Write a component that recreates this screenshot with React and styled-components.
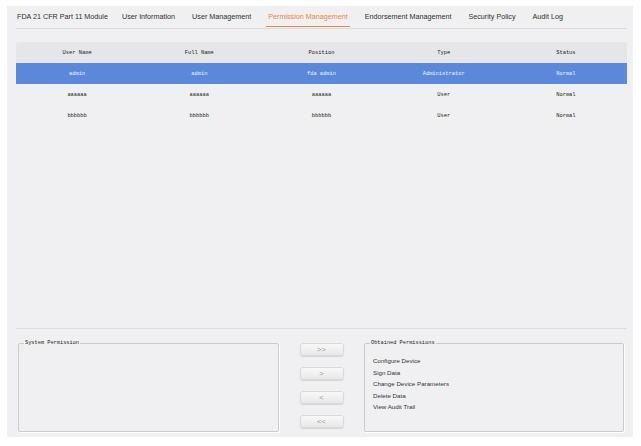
import React from 'react';
import styled, { createGlobalStyle } from 'styled-components';

const Global = createGlobalStyle`
  body {
    margin: 0;
    background: #ffffff;
    font-family: "Liberation Sans", Arial, sans-serif;
  }
`;

const Frame = styled.div`
  padding: 6px 0 0 7px;
`;

const Panel = styled.div`
  width: 626px;
  height: 431px;
  background: #f0f0f2;
  box-sizing: border-box;
  padding: 0 6px 5px 9px;
  display: flex;
  flex-direction: column;
`;

const TabBar = styled.div`
  display: flex;
  align-items: flex-start;
  gap: 13px;
  height: 23px;
  box-sizing: border-box;
  padding-top: 6px;
  border-bottom: 1px solid #dcdcde;
`;

const Tab = styled.div`
  font-size: 7.2px;
  line-height: 10px;
  padding: 0 2px 4px;
  color: ${({ active }) => (active ? '#e8853e' : '#2f2f2f')};
  border-bottom: 1.5px solid ${({ active }) => (active ? '#e8853e' : 'transparent')};
  white-space: nowrap;
  margin-left: ${({ first }) => (first ? '-1px' : '0')};
  margin-right: ${({ first }) => (first ? '-3px' : '0')};
`;

const TableArea = styled.div`
  flex: 1;
  padding-top: 13px;
  border-bottom: 1px solid #dcdcde;
`;

const Row = styled.div`
  display: grid;
  grid-template-columns: repeat(5, 1fr);
  height: 21px;
  align-items: center;
  background: ${({ head, selected }) => (selected ? '#5c88da' : head ? '#e6e6e8' : 'transparent')};
  border-radius: ${({ head }) => (head ? '3px 3px 0 0' : '0')};
`;

const Cell = styled.div`
  text-align: center;
  font-family: "Liberation Mono", "Courier New", monospace;
  font-size: 5.4px;
  color: ${({ selected }) => (selected ? '#eef3fc' : '#222222')};
  white-space: nowrap;
`;

const Bottom = styled.div`
  display: grid;
  grid-template-columns: 261px 1fr 260px;
  padding: 11px 3px 0 2px;
  height: 103px;
  box-sizing: border-box;
`;

const Group = styled.fieldset`
  margin: 0;
  padding: 9px 0 0 8px;
  border: 1px solid #cbcbcd;
  border-radius: 2px;
  height: 92px;
  box-sizing: border-box;
  box-shadow: 1px 1px 0 #ffffff;
`;

const Legend = styled.legend`
  margin-left: -3px;
  padding: 0 1px;
  font-family: "Liberation Mono", "Courier New", monospace;
  font-size: 5.3px;
  color: #222222;
`;

const Item = styled.div`
  font-size: 6.2px;
  line-height: 11.6px;
  color: #333333;
  white-space: nowrap;
`;

const Buttons = styled.div`
  display: flex;
  flex-direction: column;
  align-items: center;
  gap: 11px;
  padding-top: 3px;
`;

const MoveButton = styled.div`
  width: 44px;
  height: 13px;
  box-sizing: border-box;
  border: 1px solid #d9d9db;
  border-radius: 3px;
  background: linear-gradient(#f8f8f8, #e8e8ea);
  box-shadow: 0 1px 1px rgba(0, 0, 0, 0.12);
  display: flex;
  align-items: center;
  justify-content: center;
  font-family: "Liberation Sans", sans-serif;
  font-size: 7.5px;
  color: #9a9a9a;
`;

const tabs = [
  'FDA 21 CFR Part 11 Module',
  'User Information',
  'User Management',
  'Permission Management',
  'Endorsement Management',
  'Security Policy',
  'Audit Log',
];

const users = [
  { name: 'admin', full: 'admin', position: 'fda admin', type: 'Administrator', status: 'Normal', selected: true },
  { name: 'aaaaaa', full: 'aaaaaa', position: 'aaaaaa', type: 'User', status: 'Normal' },
  { name: 'bbbbbb', full: 'bbbbbb', position: 'bbbbbb', type: 'User', status: 'Normal' },
];

const obtained = ['Configure Device', 'Sign Data', 'Change Device Parameters', 'Delete Data', 'View Audit Trail'];

export default function App() {
  return (
    <Frame>
      <Global />
      <Panel>
        <TabBar>
          {tabs.map((t, i) => (
            <Tab key={t} first={i === 0} active={t === 'Permission Management'}>
              {t}
            </Tab>
          ))}
        </TabBar>
        <TableArea>
          <Row head>
            {['User Name', 'Full Name', 'Position', 'Type', 'Status'].map((h) => (
              <Cell key={h}>{h}</Cell>
            ))}
          </Row>
          {users.map((u) => (
            <Row key={u.name} selected={u.selected}>
              {[u.name, u.full, u.position, u.type, u.status].map((v, i) => (
                <Cell key={i} selected={u.selected}>{v}</Cell>
              ))}
            </Row>
          ))}
        </TableArea>
        <Bottom>
          <Group>
            <Legend>System Permission</Legend>
          </Group>
          <Buttons>
            <MoveButton>&gt;&gt;</MoveButton>
            <MoveButton>&gt;</MoveButton>
            <MoveButton>&lt;</MoveButton>
            <MoveButton>&lt;&lt;</MoveButton>
          </Buttons>
          <Group>
            <Legend>Obtained Permissions</Legend>
            {obtained.map((o) => (
              <Item key={o}>{o}</Item>
            ))}
          </Group>
        </Bottom>
      </Panel>
    </Frame>
  );
}
